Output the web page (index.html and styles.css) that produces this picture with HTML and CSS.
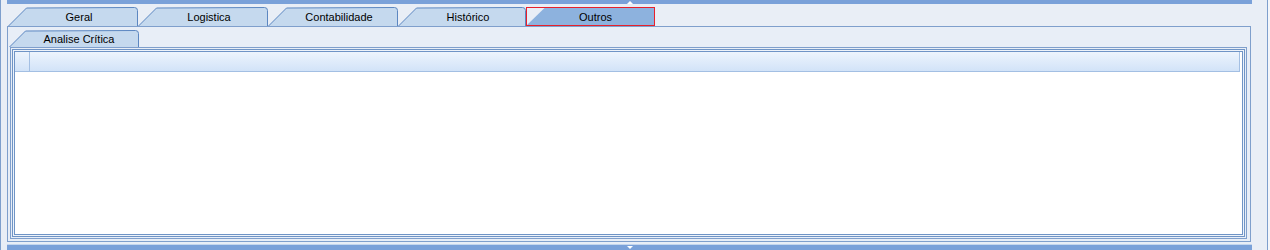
FILE: index.html
```html
<!DOCTYPE html>
<html lang="pt">
<head>
    <meta charset="UTF-8">
    <title>Outros</title>
    <link rel="stylesheet" href="styles.css">
</head>
<body>
    <div class="frame">
        <div class="splitter top"><span class="seta cima"></span></div>

        <div class="abas">
            <div class="aba">
                <svg class="forma" width="130" height="19" viewBox="0 0 130 19"><path d="M0.5 19 L18.5 1 L126.5 0.5 Q129.5 0.5 129.5 3.5 L129.5 19" /></svg>
                <span>Geral</span>
            </div>
            <div class="aba">
                <svg class="forma" width="130" height="19" viewBox="0 0 130 19"><path d="M0.5 19 L18.5 1 L126.5 0.5 Q129.5 0.5 129.5 3.5 L129.5 19" /></svg>
                <span>Logistica</span>
            </div>
            <div class="aba">
                <svg class="forma" width="130" height="19" viewBox="0 0 130 19"><path d="M0.5 19 L18.5 1 L126.5 0.5 Q129.5 0.5 129.5 3.5 L129.5 19" /></svg>
                <span>Contabilidade</span>
            </div>
            <div class="aba curta">
                <svg class="forma" width="128" height="19" viewBox="0 0 128 19"><path d="M0.5 19 L18.5 1 L124.5 0.5 Q127.5 0.5 127.5 3.5 L127.5 19" /></svg>
                <span>Histórico</span>
            </div>
            <div class="aba ativa">
                <svg class="forma" width="129" height="19" viewBox="0 0 129 19"><path d="M1 18 L18.5 1 L128 1 L128 18 Z" /></svg>
                <span>Outros</span>
            </div>
        </div>

        <div class="painel">
            <div class="subabas">
                <div class="aba sub">
                    <svg class="forma" width="130" height="17" viewBox="0 0 130 17"><path d="M0.5 17 L16.5 1 L126.5 0.5 Q129.5 0.5 129.5 3.5 L129.5 17" /></svg>
                    <span>Analise Crítica</span>
                </div>
            </div>
            <div class="subpainel">
                <div class="grade">
                    <div class="grade-int">
                        <div class="cabecalho">
                            <div class="celula-ind"></div>
                            <div class="celula"></div>
                        </div>
                    </div>
                </div>
            </div>
        </div>

        <div class="splitter bottom"><span class="seta baixo"></span></div>
    </div>
</body>
</html>
```

FILE: styles.css
```css
body {
    margin: 0;
    padding: 0;
    background-color: #f4f6fa;
    font-family: "Liberation Sans", Arial, sans-serif;
    font-size: 11px;
    color: #000;
}

.frame {
    width: 1266px;
    height: 250px;
    border-left: 1px solid #7e9fcd;
    border-right: 1px solid #7e9fcd;
    background-color: #e9eef6;
    display: flex;
    flex-direction: column;
}

.splitter {
    height: 4px;
    margin: 0 15px 0 6px;
    background-color: #7aa1d9;
    display: flex;
    justify-content: center;
}

.splitter.bottom {
    height: 5px;
    margin-top: 2px;
    border-top: 1px solid #c4d6ee;
}

.seta {
    width: 0;
    height: 0;
    margin-top: 1px;
    border-left: 3px solid transparent;
    border-right: 3px solid transparent;
}

.seta.cima {
    border-bottom: 3px solid #ffffff;
}

.seta.baixo {
    border-top: 3px solid #ffffff;
    margin-top: 1px;
}

/* abas principais */
.abas {
    display: flex;
    margin-top: 3px;
    padding-left: 7px;
    height: 19px;
}

.aba {
    position: relative;
    width: 130px;
    height: 19px;
    flex: none;
}

.aba.curta {
    width: 128px;
}

.aba .forma {
    position: absolute;
    left: 0;
    top: 0;
}

.aba .forma path {
    fill: #c5d9ee;
    stroke: #5c87c1;
    stroke-width: 1;
}

.aba span {
    position: relative;
    display: block;
    padding-left: 12px;
    line-height: 20px;
    text-align: center;
}

.aba.ativa {
    width: 129px;
    box-sizing: border-box;
    border: 1px solid #e8202b;
}

.aba.ativa .forma {
    left: -1px;
    top: -1px;
}

.aba.ativa .forma path {
    fill: #8db2de;
    stroke: none;
}

.aba.ativa span {
    line-height: 18px;
    padding-left: 10px;
}

/* painel */
.painel {
    margin-left: 6px;
    width: 1242px;
    height: 213px;
    border: 1px solid #7f9fcc;
    background-color: #e8eef7;
    padding-top: 3px;
    box-sizing: content-box;
    display: flex;
    flex-direction: column;
}

.subabas {
    display: flex;
    padding-left: 1px;
    height: 17px;
}

.aba.sub {
    height: 17px;
}

.aba.sub span {
    padding-left: 10px;
    line-height: 18px;
}

.subpainel {
    margin-left: 2px;
    width: 1233px;
    height: 188px;
    border: 1px solid #7f9fcc;
    padding: 1px;
    box-sizing: content-box;
}

.grade {
    height: 184px;
    border: 1px solid #6f94c6;
    padding: 1px;
    background-color: #eef3fa;
}

.grade-int {
    height: 182px;
    border: 1px solid #6f94c6;
    background-color: #ffffff;
}

.cabecalho {
    display: flex;
    height: 19px;
    margin-right: 2px;
    border-bottom: 1px solid #a3bfe3;
    border-right: 1px solid #a3bfe3;
    background: linear-gradient(#edf4fd, #d2e3f8);
}

.celula-ind {
    width: 14px;
    border-right: 1px solid #a3bfe3;
}

.celula {
    flex: 1;
}
```
